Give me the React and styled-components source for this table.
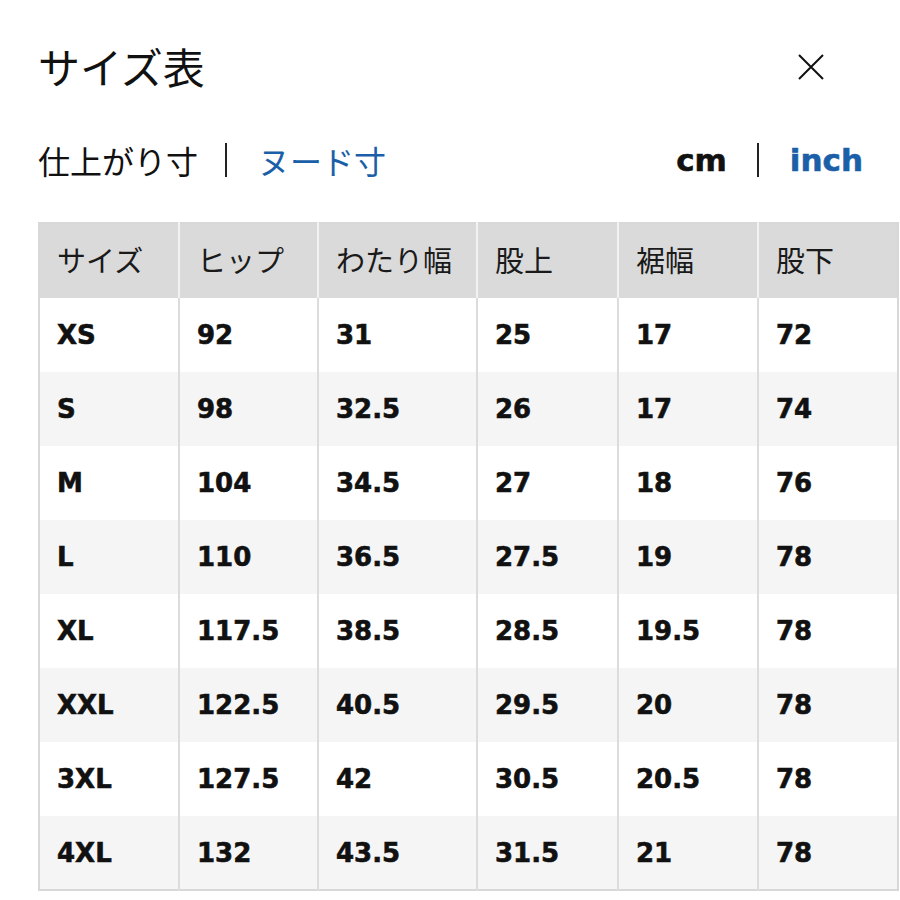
import React from 'react'
import styled, { createGlobalStyle } from 'styled-components'

const GlobalStyle = createGlobalStyle`
  * { box-sizing: border-box; }
  body {
    margin: 0;
    background: #fff;
    font-family: "Noto Sans CJK JP", "Noto Sans", sans-serif;
    color: #111;
  }
`

const columns = ['サイズ', 'ヒップ', 'わたり幅', '股上', '裾幅', '股下']
const widths = [140, 139, 159, 141, 140, 140]

const rows = [
  ['XS', '92', '31', '25', '17', '72'],
  ['S', '98', '32.5', '26', '17', '74'],
  ['M', '104', '34.5', '27', '18', '76'],
  ['L', '110', '36.5', '27.5', '19', '78'],
  ['XL', '117.5', '38.5', '28.5', '19.5', '78'],
  ['XXL', '122.5', '40.5', '29.5', '20', '78'],
  ['3XL', '127.5', '42', '30.5', '20.5', '78'],
  ['4XL', '132', '43.5', '31.5', '21', '78'],
]

function App() {
  return (
    <Page>
      <GlobalStyle />
      <TitleBar>
        <Title>サイズ表</Title>
        <CloseButton aria-label="close">
          <svg width="26" height="26" viewBox="0 0 26 26">
            <path d="M1 1 L25 25 M25 1 L1 25" stroke="#111" strokeWidth="2" fill="none" />
          </svg>
        </CloseButton>
      </TitleBar>

      <Switches>
        <Toggle>
          <JpOption>仕上がり寸</JpOption>
          <Divider />
          <JpOption active>ヌード寸</JpOption>
        </Toggle>
        <Toggle>
          <UnitOption>cm</UnitOption>
          <Divider unit />
          <UnitOption active>inch</UnitOption>
        </Toggle>
      </Switches>

      <Table>
        <colgroup>
          {widths.map((w, i) => (
            <col key={i} style={{ width: w }} />
          ))}
        </colgroup>
        <thead>
          <tr>
            {columns.map((c) => (
              <Th key={c}>{c}</Th>
            ))}
          </tr>
        </thead>
        <tbody>
          {rows.map((r, i) => (
            <Row key={r[0]} striped={i % 2 === 1}>
              {r.map((v, j) => (
                <Td key={j}>{v}</Td>
              ))}
            </Row>
          ))}
        </tbody>
      </Table>
    </Page>
  )
}

export default App

const Page = styled.div`
  width: 900px;
  padding: 0 3px 0 38px;
`

const TitleBar = styled.div`
  display: flex;
  align-items: flex-start;
  justify-content: space-between;
  height: 134px;
  padding-top: 40px;
`

const Title = styled.h1`
  margin: 0;
  font-size: 42px;
  line-height: 52px;
  font-weight: 400;
  color: #111;
`

const CloseButton = styled.button`
  border: none;
  background: none;
  padding: 0;
  margin: 14px 73px 0 0;
  cursor: pointer;
  display: flex;
`

const Switches = styled.div`
  display: flex;
  justify-content: space-between;
  align-items: center;
  height: 52px;
  padding-right: 34px;
`

const Toggle = styled.div`
  display: flex;
  align-items: center;
`

const JpOption = styled.span`
  font-size: 32px;
  line-height: 40px;
  color: ${(p) => (p.active ? '#1b5fa8' : '#111')};
`

const UnitOption = styled.span`
  font-family: "DejaVu Sans", "Liberation Sans", sans-serif;
  font-weight: 700;
  font-size: 31px;
  line-height: 40px;
  -webkit-text-stroke: 0.6px currentColor;
  color: ${(p) => (p.active ? '#1b5fa8' : '#111')};
`

const Divider = styled.span`
  display: block;
  width: 2px;
  height: 34px;
  background: #222;
  margin: ${(p) => (p.unit ? '0 31px 0 30px' : '0 31px 0 27px')};
`

const Table = styled.table`
  margin-top: 36px;
  border-collapse: collapse;
  table-layout: fixed;
  width: 859px;
  border: 2px solid #d8d8d8;
`

const Th = styled.th`
  height: 75px;
  padding: 0 0 4px 17px;
  text-align: left;
  font-weight: 400;
  font-size: 29px;
  color: #1a1a1a;
  background: #dadada;
  border-left: 2px solid #f2f2f2;
  &:first-child { border-left: none; }
`

const Row = styled.tr`
  background: ${(p) => (p.striped ? '#f5f5f5' : '#ffffff')};
`

const Td = styled.td`
  height: 74px;
  padding: 0 0 0 17px;
  font-family: "DejaVu Sans", "Liberation Sans", sans-serif;
  font-weight: 700;
  font-size: 26px;
  -webkit-text-stroke: 0.6px #111;
  color: #111;
  border-left: 2px solid #dcdcdc;
  &:first-child { border-left: none; }
`
